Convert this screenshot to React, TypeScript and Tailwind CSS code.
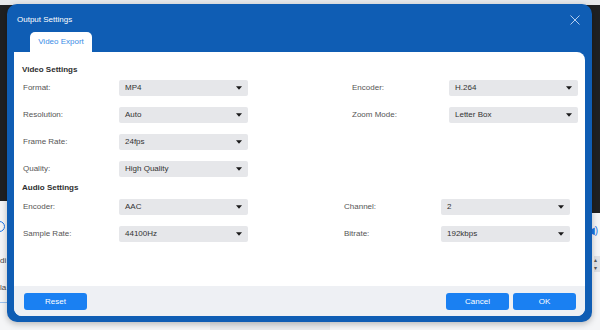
import React from "react";

function Select({ value }: { value: string }) {
  return (
    <div className="w-[129px] h-[16px] bg-[#e6e7ea] rounded-[2px] flex items-center justify-between pl-[6px] pr-[6px] text-[8px] text-[#333]">
      <span>{value}</span>
      <svg width="6" height="4" viewBox="0 0 6 4">
        <path d="M0 0.3H6L3 3.8Z" fill="#1a1a1a" />
      </svg>
    </div>
  );
}

function Row({
  left,
  right,
  gap,
}: {
  left: [string, string];
  right?: [string, string];
  gap?: string;
}) {
  return (
    <div className="flex items-center h-[16px]">
      <span className="w-[96px] text-[#555]">{left[0]}</span>
      <Select value={left[1]} />
      {right && (
        <>
          <div className={gap} />
          <span className="w-[97px] text-[#555]">{right[0]}</span>
          <Select value={right[1]} />
        </>
      )}
    </div>
  );
}

export default function App() {
  return (
    <div className="relative w-[600px] h-[330px] overflow-hidden bg-[#f4f5f7] font-['Liberation_Sans',Arial,sans-serif] text-[8px]">
      {/* app behind the dialog */}
      <div className="flex flex-col h-full">
        <div className="h-[5px] bg-[#e6e8eb]" />
        <div className="flex-1 flex justify-between">
          <div className="w-[40px] flex flex-col">
            <div className="h-[196px] bg-[#1f2022]" />
            <div className="flex-1 bg-[#f4f5f7] flex flex-col">
              <div className="mt-[20px] -ml-[6px] w-[11px] h-[11px] rounded-full border-[1.5px] border-[#1a74e6]" />
              <span className="mt-[23px] text-[#444]">di</span>
              <span className="mt-[15px] text-[#444]">la</span>
              <div className="mt-[8px] h-[1px] bg-[#9cc2ef]" />
            </div>
          </div>
          <div className="w-[40px] flex flex-col items-end">
            <div className="h-[208px] w-full bg-[#1f2022]" />
            <div className="mt-[10px] mr-[2px] text-[#1a74e6] text-[10px]">◀)</div>
            <div className="mt-[18px] w-[6px] h-[16px] bg-[#dfe1e5] text-[6px] leading-[8px] text-[#555]">
              ▴<br />▾
            </div>
          </div>
        </div>
        <div className="h-[8px] flex items-start">
          <div className="ml-[210px] w-[120px] h-[8px] bg-[#e8eaed]" />
        </div>
      </div>

      {/* dialog */}
      <div className="absolute left-[7px] top-[4px] w-[585px] h-[318px] rounded-[10px] bg-[#0f5db4] shadow-[0_2px_6px_rgba(0,0,0,0.25)] flex flex-col px-[7px] pb-[6px]">
        <div className="h-[28px] flex items-center justify-between pt-[3px] pl-[3px] pr-[5px]">
          <span className="text-white text-[8px]">Output Settings</span>
          <svg width="10" height="10" viewBox="0 0 10 10">
            <path d="M0.5 0.5L9.5 9.5M9.5 0.5L0.5 9.5" stroke="#b3cdef" strokeWidth="1" />
          </svg>
        </div>
        <div className="h-[20px] pl-[16px] flex">
          <div className="w-[62px] h-full bg-white rounded-t-[5px] flex items-center justify-center text-[#3a8de6]">
            Video Export
          </div>
        </div>
        <div className="flex-1 bg-white rounded-tr-[8px] rounded-b-[8px] flex flex-col overflow-hidden">
          <div className="flex-1 pl-[9px] pt-[11px] flex flex-col">
            <div className="h-[14px] leading-[14px] font-bold text-[#2e2e2e] -ml-[1px]">Video Settings</div>
            <div className="mt-[3px] flex flex-col gap-[11px]">
              <Row left={["Format:", "MP4"]} right={["Encoder:", "H.264"]} gap="w-[104px]" />
              <Row left={["Resolution:", "Auto"]} right={["Zoom Mode:", "Letter Box"]} gap="w-[104px]" />
              <Row left={["Frame Rate:", "24fps"]} />
              <Row left={["Quality:", "High Quality"]} />
            </div>
            <div className="mt-[4px] h-[14px] leading-[14px] font-bold text-[#2e2e2e] -ml-[1px]">Audio Settings</div>
            <div className="mt-[4px] flex flex-col gap-[11px]">
              <Row left={["Encoder:", "AAC"]} right={["Channel:", "2"]} gap="w-[96px]" />
              <Row left={["Sample Rate:", "44100Hz"]} right={["Bitrate:", "192kbps"]} gap="w-[96px]" />
            </div>
          </div>
          <div className="h-[30px] bg-[#eef0f4] flex items-start justify-between pt-[7px] pl-[10px] pr-[9px]">
            <button className="w-[63px] h-[17px] rounded-[3px] bg-[#1a80f2] text-white text-[8px]">Reset</button>
            <div className="flex gap-[4px]">
              <button className="w-[63px] h-[17px] rounded-[3px] bg-[#1a80f2] text-white text-[8px]">Cancel</button>
              <button className="w-[63px] h-[17px] rounded-[3px] bg-[#1a80f2] text-white text-[8px]">OK</button>
            </div>
          </div>
        </div>
      </div>
    </div>
  );
}
